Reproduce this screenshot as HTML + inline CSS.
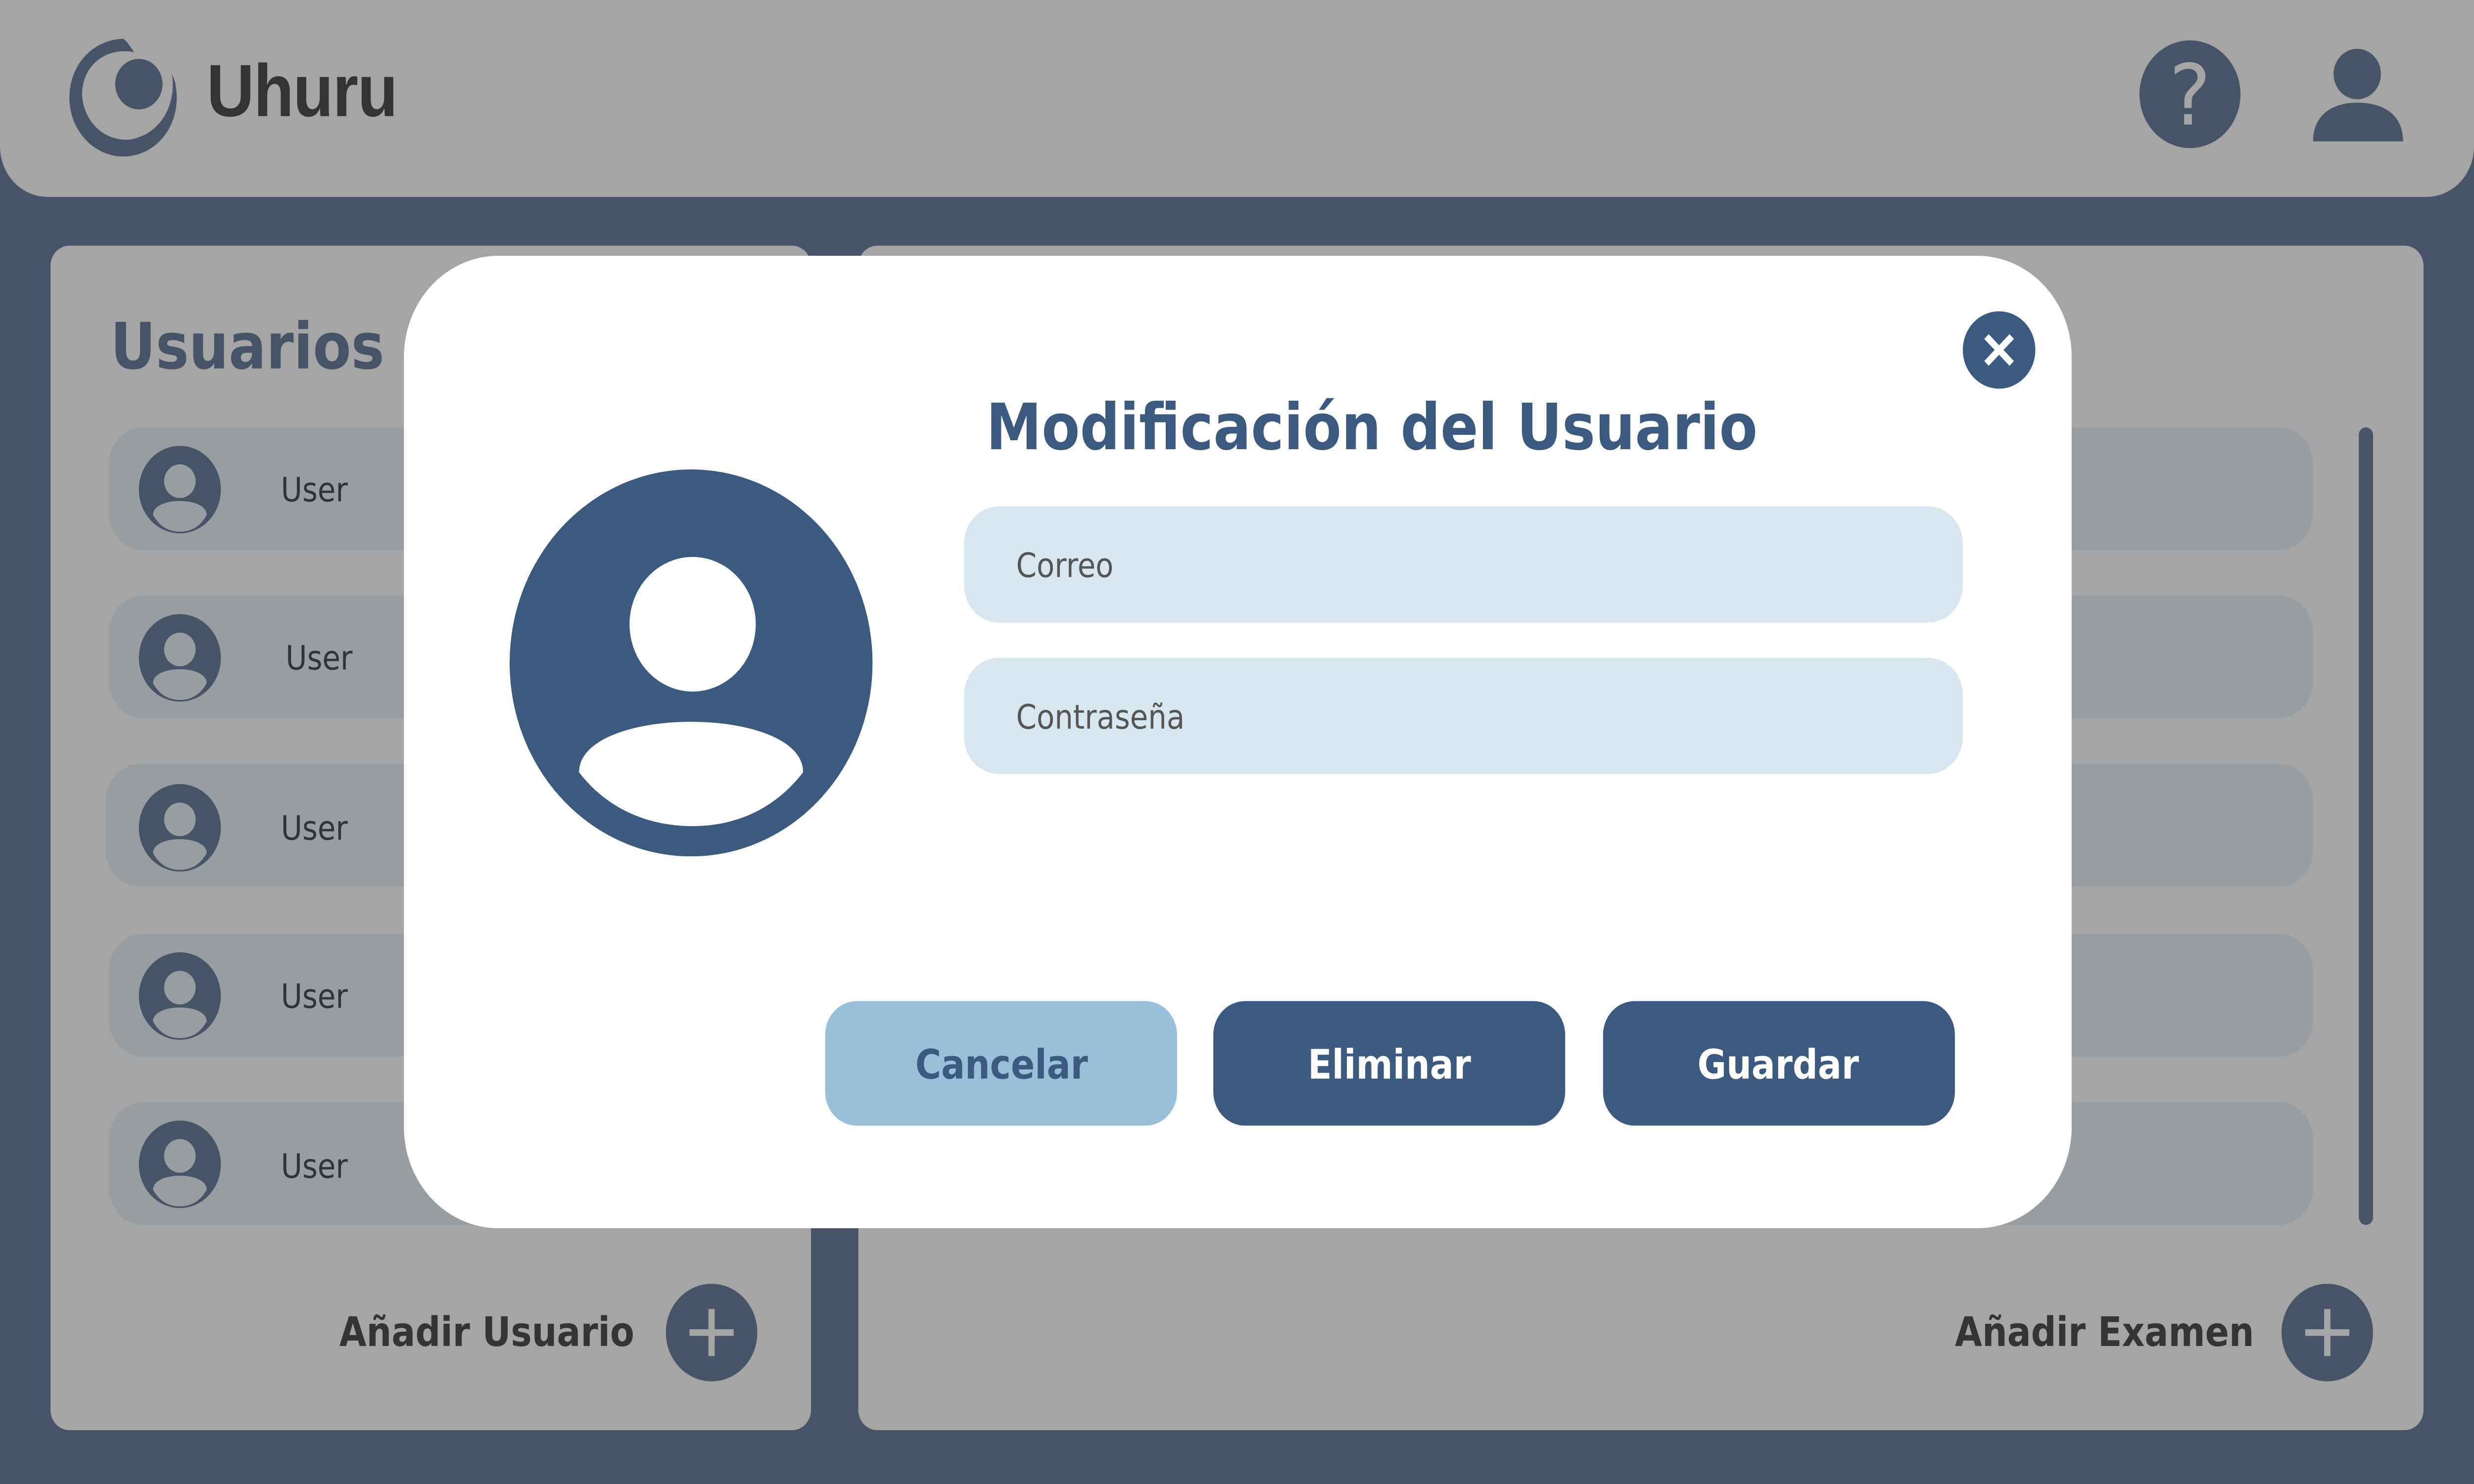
<!DOCTYPE html>
<html><head><meta charset="utf-8"><style>
html,body{margin:0;padding:0;width:100%;height:100%;overflow:hidden;background:#475468;}
#w{position:absolute;left:0;top:0;width:1568px;height:882px;transform:scale(3.1912,3.4014);transform-origin:0 0;font-family:"DejaVu Sans","Liberation Sans",sans-serif;}
.a{position:absolute;}
.n{transform:scaleX(0.93);transform-origin:0 50%;white-space:nowrap;}
.c{display:inline-block;transform:scaleX(0.93);}
.hdr{left:0;top:0;width:1568px;height:117px;background:#a5a5a5;border-radius:0 0 30px 30px;}
.pan{background:#a5a5a5;border-radius:12px;}
.item{background:#979da0;border-radius:22px;height:73px;}
.user{font-size:20px;color:#333;}
.btn{height:74px;width:223px;border-radius:20px;font-weight:bold;font-size:24px;text-align:center;line-height:76px;}
.inp{left:611px;width:633px;height:69px;background:#d7e6ef;border-radius:22px;font-size:20px;color:#555;line-height:70px;}
.inp span{position:absolute;left:33px;}
</style></head><body><div id="w">
<div class="a hdr"></div>
<svg class="a" style="left:42px;top:22px" width="72" height="72" viewBox="0 0 72 72">
<path d="M36 1 C15 2 2 18 2 36 C2 56 18 71 36 71 C55 71 70 56 70 36 C70 30 69 26 67 22 C70 40 60 58 40 61 C22 62 10 48 10 33 C11 15 27 6 43 9 C40 5 38 2 36 1Z" fill="#475468"/>
<ellipse cx="46" cy="28" rx="15" ry="15" fill="#475468"/>
</svg>
<div class="a" style="left:131px;top:30px;font-family:'Liberation Sans',sans-serif;font-weight:bold;font-size:44px;color:#343434;letter-spacing:-0.5px;transform:scaleX(0.95);transform-origin:0 0">Uhuru</div>
<div class="a" style="left:1356px;top:24px;width:64px;height:64px;border-radius:50%;background:#475468;color:#a5a5a5;font-size:50px;text-align:center;line-height:66px">?</div>
<svg class="a" style="left:1465px;top:27px" width="60" height="60" viewBox="0 0 60 60"><circle cx="29" cy="17" r="15" fill="#475468"/><path d="M1 57 C1 40 15 34 29 34 C44 34 58 40 58 57Z" fill="#475468"/></svg>

<div class="a pan" style="left:32px;top:146px;width:482px;height:704px"></div>
<div class="a pan" style="left:544px;top:146px;width:992px;height:704px"></div>
<div class="a n" style="left:70px;top:184px;font-size:38px;font-weight:bold;color:#475468">Usuarios</div>
<div class="a item" style="left:69px;top:254px;width:1397px"></div>
<div class="a item" style="left:69px;top:354px;width:1397px"></div>
<div class="a item" style="left:67px;top:454px;width:1399px"></div>
<div class="a item" style="left:69px;top:555px;width:1397px"></div>
<div class="a item" style="left:69px;top:655px;width:1397px"></div>
<svg class="a" style="left:87px;top:264px" width="54" height="460" viewBox="0 0 54 460">
<g id="u"><circle cx="27" cy="27" r="26" fill="#475468"/><circle cx="27" cy="22" r="10" fill="#979da0"/><path d="M10 42 C10 31 44 31 44 42 C40 49 34 52 27 52 C20 52 14 49 10 42Z" fill="#979da0"/></g>
<use href="#u" y="100"/><use href="#u" y="201"/><use href="#u" y="301"/><use href="#u" y="401"/></svg>
<div class="a user n" style="left:178px;top:279px">User</div>
<div class="a user n" style="left:181px;top:379px">User</div>
<div class="a user n" style="left:178px;top:480px">User</div>
<div class="a user n" style="left:178px;top:580px">User</div>
<div class="a user n" style="left:178px;top:681px">User</div>
<div class="a" style="left:1495px;top:254px;width:9px;height:474px;background:#475468;border-radius:5px"></div>
<div class="a n" style="left:215px;top:778px;font-size:24px;font-weight:bold;color:#343434">Añadir Usuario</div>
<div class="a n" style="left:1239px;top:778px;font-size:24px;font-weight:bold;color:#343434">Añadir Examen</div>
<svg class="a" style="left:422px;top:763px" width="58" height="58"><circle cx="29" cy="29" r="29" fill="#475468"/><path d="M29 15V43M15 29H43" stroke="#a5a5a5" stroke-width="4"/></svg>
<svg class="a" style="left:1446px;top:763px" width="58" height="58"><circle cx="29" cy="29" r="29" fill="#475468"/><path d="M29 15V43M15 29H43" stroke="#a5a5a5" stroke-width="4"/></svg>

<div class="a" style="left:256px;top:152px;width:1057px;height:578px;background:#fff;border-radius:60px"></div>
<svg class="a" style="left:1244px;top:185px" width="46" height="46"><circle cx="23" cy="23" r="23" fill="#3c5a80"/><path d="M15 15L31 31M31 15L15 31" stroke="#fff" stroke-width="4"/></svg>
<div class="a n" style="left:625px;top:232px;font-size:38px;font-weight:bold;color:#3c5a80">Modificación del Usuario</div>
<svg class="a" style="left:323px;top:279px" width="230" height="230" viewBox="0 0 230 230"><circle cx="115" cy="115" r="115" fill="#3c5a80"/><circle cx="116" cy="92" r="40" fill="#fff"/><path d="M44 180 C44 140 186 140 186 180 C168 202 143 212 116 212 C88 212 62 202 44 180Z" fill="#fff"/></svg>
<div class="a inp" style="top:301px"><span class="n">Correo</span></div>
<div class="a inp" style="top:391px"><span class="n">Contraseña</span></div>
<div class="a btn" style="left:523px;top:595px;background:#98c1d9;color:#3c5a80"><span class="c">Cancelar</span></div>
<div class="a btn" style="left:769px;top:595px;background:#3c5a80;color:#fff"><span class="c">Eliminar</span></div>
<div class="a btn" style="left:1016px;top:595px;background:#3c5a80;color:#fff"><span class="c">Guardar</span></div>
</div>
<script>
(function(){var w=document.getElementById('w');function f(){var W=window.innerWidth,H=window.innerHeight;if(W>0&&H>0){w.style.transform='scale('+(W/1568)+','+(H/882)+')';}}f();window.addEventListener('resize',f);})();
</script>
</body></html>
